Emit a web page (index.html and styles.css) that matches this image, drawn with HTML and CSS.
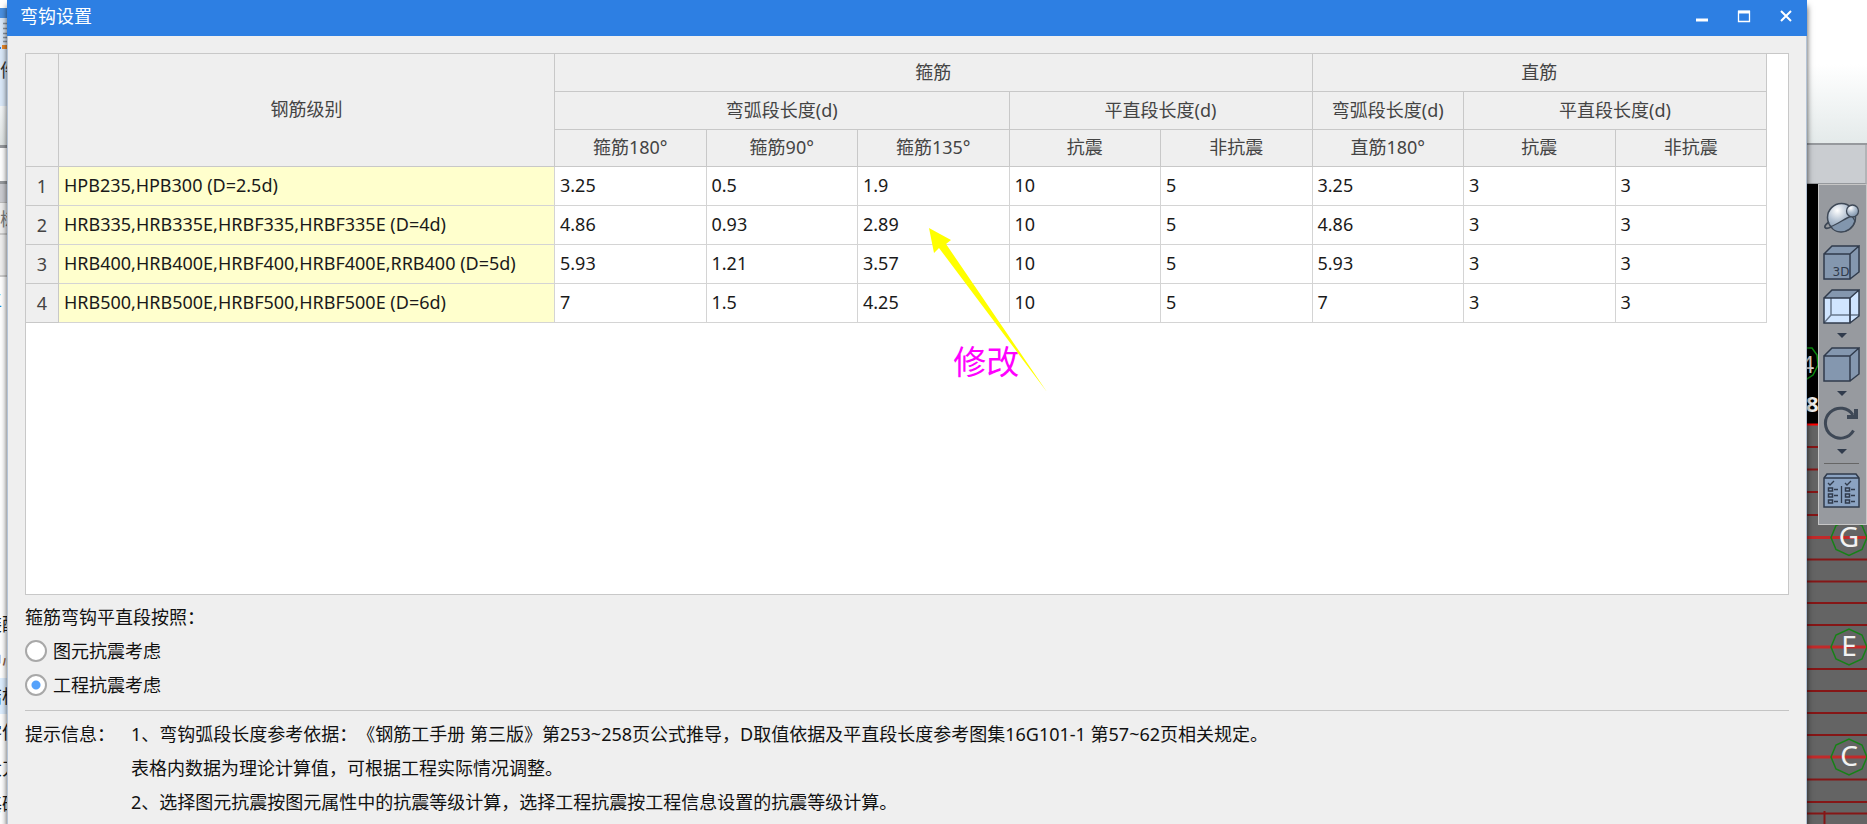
FILE: index.html
```html
<!DOCTYPE html>
<html lang="zh-CN">
<head>
<meta charset="utf-8">
<title>弯钩设置</title>
<link rel="stylesheet" href="styles.css">
</head>
<body>
<div class="app">
  <aside class="left-pane">
    <div class="lp-top"></div>
    <div class="lp-ribbon">
      <svg class="lp-list" width="7" height="32" viewBox="0 0 7 32"><path d="M3 5.500h4M3 10.500h4M3 15.500h4M3 19.500h4M3 23.500h4" stroke="#8b95a0" stroke-width="1.500"/><path d="M0 30h1" stroke="#2d7fe3" stroke-width="2"/><rect x="2" y="27" width="5" height="4" fill="#e98a2c"/></svg>
      <div class="lp-caption">件</div>
    </div>
    <div class="lp-fade"></div>
    <div class="lp-blank"></div>
    <div class="lp-bar"></div>
    <div class="lp-head">树</div>
    <div class="lp-sub"></div>
    <div class="lp-link">主</div>
    <ul class="lp-tree">
      <li>装配</li>
      <li class="accent">中心</li>
      <li class="current">结构</li>
      <li>零件</li>
      <li>大刀</li>
      <li>基础</li>
    </ul>
  </aside>

  <main class="dialog">
    <header class="titlebar">
      <h1 class="title">弯钩设置</h1>
      <div class="controls">
        <button class="control" aria-label="最小化"><svg width="14" height="14" viewBox="0 0 14 14"><path d="M1 11h12" stroke="#fff" stroke-width="3"/></svg></button>
        <button class="control" aria-label="最大化"><svg width="14" height="14" viewBox="0 0 14 14"><path d="M1.500 12.500V2.500h11v10z" fill="none" stroke="#fff" stroke-width="1.300"/><path d="M1 3h12" stroke="#fff" stroke-width="3"/></svg></button>
        <button class="control" aria-label="关闭"><svg width="14" height="14" viewBox="0 0 14 14"><path d="M2 2l10 10M12 2L2 12" stroke="#fff" stroke-width="2"/></svg></button>
      </div>
    </header>

    <div class="content">
      <div class="grid-box">
        <table class="grid">
          <colgroup><col class="c-index"><col class="c-name"><col><col><col><col><col><col><col><col></colgroup>
          <thead>
            <tr><th rowspan="3"></th><th rowspan="3">钢筋级别</th><th colspan="5">箍筋</th><th colspan="3">直筋</th></tr>
            <tr><th colspan="3">弯弧段长度(d)</th><th colspan="2">平直段长度(d)</th><th>弯弧段长度(d)</th><th colspan="2">平直段长度(d)</th></tr>
            <tr><th>箍筋180°</th><th>箍筋90°</th><th>箍筋135°</th><th>抗震</th><th>非抗震</th><th>直筋180°</th><th>抗震</th><th>非抗震</th></tr>
          </thead>
          <tbody>
            <tr><th>1</th><td class="name">HPB235,HPB300 (D=2.5d)</td><td>3.25</td><td>0.5</td><td>1.9</td><td>10</td><td>5</td><td>3.25</td><td>3</td><td>3</td></tr>
            <tr><th>2</th><td class="name">HRB335,HRB335E,HRBF335,HRBF335E (D=4d)</td><td>4.86</td><td>0.93</td><td>2.89</td><td>10</td><td>5</td><td>4.86</td><td>3</td><td>3</td></tr>
            <tr><th>3</th><td class="name">HRB400,HRB400E,HRBF400,HRBF400E,RRB400 (D=5d)</td><td>5.93</td><td>1.21</td><td>3.57</td><td>10</td><td>5</td><td>5.93</td><td>3</td><td>3</td></tr>
            <tr><th>4</th><td class="name">HRB500,HRB500E,HRBF500,HRBF500E (D=6d)</td><td>7</td><td>1.5</td><td>4.25</td><td>10</td><td>5</td><td>7</td><td>3</td><td>3</td></tr>
          </tbody>
        </table>
        <div class="callout">
          <span class="callout-text">修改</span>
          <svg class="callout-arrow" width="120" height="166" viewBox="0 0 120 166"><path d="M1 1L23 13l-5 4L119 165 11 21l-5 5z" fill="#ff0"/></svg>
        </div>
      </div>

      <fieldset class="options">
        <legend class="line">箍筋弯钩平直段按照：</legend>
        <label class="line option"><input type="radio" name="basis" class="radio">图元抗震考虑</label>
        <label class="line option"><input type="radio" name="basis" class="radio" checked>工程抗震考虑</label>
      </fieldset>
      <hr class="rule">
      <section class="hints">
        <div class="line">提示信息：</div>
        <div class="hint-list">
          <p class="line">1、弯钩弧段长度参考依据：《钢筋工手册 第三版》第253~258页公式推导，D取值依据及平直段长度参考图集16G101-1 第57~62页相关规定。</p>
          <p class="line">表格内数据为理论计算值，可根据工程实际情况调整。</p>
          <p class="line">2、选择图元抗震按图元属性中的抗震等级计算，选择工程抗震按工程信息设置的抗震等级计算。</p>
        </div>
      </section>
    </div>
  </main>

  <aside class="right-pane">
    <div class="rp-ribbon"></div>
    <div class="rp-bar"></div>
    <div class="canvas">
      <svg class="drawing" width="60" height="640" viewBox="0 0 60 640">
        <rect width="60" height="240" fill="#000"/>
        <rect y="240" width="60" height="400" fill="#646464"/>
        <path d="M-12 170l7-6h10l5 7 1 10-5 10-6 4h-10" fill="none" stroke="#0b8a10" stroke-width="1.500"/>
        <text x="-6" y="189" class="cad-small">4</text>
        <text x="-1" y="228" class="cad-bold">8</text>
        <path d="M0 240.500h60" stroke="#f00" stroke-width="2"/>
        <path d="M0 263h60M0 285.500h60M0 308h60M0 331h60M0 375.500h60M0 397.500h60M0 419h60M0 441h60M0 485h60M0 507h60M0 529h60M0 551h60M0 595.500h60M0 618h60M0 629.500h60M17.500 627v13" stroke="#851616" stroke-width="2" fill="none"/>
        <path d="M0 353.500h60M0 463h60M0 573h60" stroke="#c22a2a" stroke-width="3"/>
        <g fill="none" stroke="#168216" stroke-width="1.500">
          <path id="mark" d="M24 353.500l5-12 13-6 13 6 5 12-5 12-13 6-13-6z"/>
          <use href="#mark" y="109.500"/>
          <use href="#mark" y="219.500"/>
        </g>
        <g class="cad-letter"><text x="42" y="363">G</text><text x="42" y="472">E</text><text x="42" y="582">C</text></g>
      </svg>
      <nav class="toolbar">
        <button class="tool" aria-label="动态观察"><svg width="37" height="35" viewBox="0 0 37 35">
          <defs><radialGradient id="ball" cx=".35" cy=".25" r=".75"><stop offset="0" stop-color="#fff"/><stop offset=".5" stop-color="#b4c2d2"/><stop offset="1" stop-color="#8094ab"/></radialGradient></defs>
          <circle cx="18.500" cy="16.500" r="14" fill="url(#ball)" stroke="#3e4856" stroke-width="1.500"/>
          <path d="M8 25.500C15 23 24 16 29 15l3 5c-2 7-8 11-14 11-4 0-8-2-10-5.500z" fill="#8296ad" stroke="#3e4856" stroke-width="1.300"/>
          <path d="M6 21c-7 5-4 8 2 5" fill="none" stroke="#3e4856" stroke-width="1.800"/>
          <circle cx="29.500" cy="10" r="6" fill="url(#ball)" stroke="#3e4856" stroke-width="1.300"/></svg></button>
        <button class="tool" aria-label="三维"><svg width="37" height="35" viewBox="0 0 37 35">
          <path d="M1 9L9 1h27v26l-9 8H1z" fill="#8497af"/><path d="M1 9h26v25H1zM1 9L9 1h27L27 9M36 1v26l-9 7" fill="none" stroke="#303b4c" stroke-width="1.500"/><text x="18" y="31" class="tool-text">3D</text></svg></button>
        <button class="tool" aria-label="线框"><svg width="37" height="35" viewBox="0 0 37 35">
          <path d="M1 9L9 1h27v26l-9 7H1z" fill="#d0e5ff"/><path d="M1 9L9 1h27l-9 8z" fill="#8497af"/><path d="M8 9v17L1 34M8 26h28M27 9v25" fill="none" stroke="#68788d" stroke-width="1.500"/><path d="M1 9h26v25H1zM1 9L9 1h27L27 9M36 1v26l-9 7" fill="none" stroke="#303b4c" stroke-width="1.500"/></svg></button>
        <button class="more" aria-label="展开"><svg width="10" height="5" viewBox="0 0 10 5"><path d="M0 0h10L5 5z" fill="#303b4c"/></svg></button>
        <button class="tool" aria-label="视图"><svg width="37" height="35" viewBox="0 0 37 35">
          <path d="M1 9L9 1h27v26l-9 7H1z" fill="#8497af"/><path d="M1 9h26v25H1zM1 9L9 1h27L27 9M36 1v26l-9 7" fill="none" stroke="#303b4c" stroke-width="1.500"/></svg></button>
        <button class="more" aria-label="展开"><svg width="10" height="5" viewBox="0 0 10 5"><path d="M0 0h10L5 5z" fill="#303b4c"/></svg></button>
        <button class="tool" aria-label="旋转"><svg width="37" height="35" viewBox="0 0 37 35">
          <path d="M30.500 25.500A15 15 0 1 1 30 10" fill="none" stroke="#3e4856" stroke-width="3"/><path d="M33 4v8H24" fill="none" stroke="#3e4856" stroke-width="4"/></svg></button>
        <button class="more" aria-label="展开"><svg width="10" height="5" viewBox="0 0 10 5"><path d="M0 0h10L5 5z" fill="#303b4c"/></svg></button>
        <div class="tool-sep"></div>
        <button class="tool" aria-label="显示设置"><svg width="37" height="35" viewBox="0 0 37 35">
          <path d="M1 5l3-4h29l3 4v29H1z" fill="#8ba3c2" stroke="#303b4c" stroke-width="1.500"/><path d="M1 5h35" stroke="#303b4c" stroke-width="1.500"/>
          <path d="M5 10l2 2 4-4M22 10l2 2 4-4M18.500 13v17" fill="none" stroke="#303b4c" stroke-width="1.300"/>
          <path d="M5.500 15h4v3h-4zM5.500 21h4v3h-4zM5.500 27h4v3h-4zM22.500 15h4v3h-4zM22.500 21h4v3h-4zM22.500 27h4v3h-4zM11 16.500h4M11 22.500h4M11 28.500h4M28 16.500h4M28 22.500h4M28 28.500h4" fill="none" stroke="#303b4c" stroke-width="1.500"/></svg></button>
      </nav>
    </div>
  </aside>
</div>
</body>
</html>
```
FILE: styles.css
```css
* { box-sizing: border-box; }

body {
  margin: 0;
  font: 18px/24px "Noto Sans", "Noto Sans CJK SC", sans-serif;
  color: #1a1a1a;
  text-spacing-trim: space-all;
}

button { border: 0; padding: 0; background: none; }

.app { display: flex; height: 100vh; overflow: hidden; }

/* application pane left of the dialog */
.left-pane { width: 7px; overflow: hidden; display: flex; flex-direction: column; background: #fff; white-space: nowrap; }
.lp-top { height: 18px; flex: none; border-bottom: 10px solid #4a90e0; }
.lp-ribbon { height: 88px; flex: none; background: #dbe9f9; }
.lp-list { display: block; }
.lp-caption { color: #333; margin-top: 8px; }
.lp-fade { height: 42px; flex: none; background: linear-gradient(#f5f8f9, #dfe4e4); border-bottom: 3px solid #96999d; }
.lp-blank { height: 33px; flex: none; }
.lp-bar { height: 22px; flex: none; background: #cbccd1; border-top: 3px solid #96999d; border-bottom: 1px solid #bbb; }
.lp-head { height: 32px; flex: none; background: #efefef; color: #777; line-height: 32px; border-bottom: 2px solid #ccc; }
.lp-sub { height: 42px; flex: none; background: #efefef; border-bottom: 2px solid #ccc; }
.lp-link { color: #1583d6; margin-top: 10px; text-indent: -16px; }
.lp-tree { list-style: none; margin: auto 0 0; padding: 0 0 2px; }
.lp-tree li { height: 36px; line-height: 36px; text-indent: -16px; }
.lp-tree .accent { color: #8d5b43; }
.lp-tree .current { background: #ddeeff; }

/* dialog */
.dialog {
  flex: 1;
  min-width: 0;
  display: flex;
  flex-direction: column;
  background: #efefef;
  box-shadow: 0 6px 6px rgba(0, 0, 0, .7);
  z-index: 1;
}
.titlebar { height: 36px; flex: none; display: flex; align-items: center; justify-content: space-between; background: #2d7fe3; padding-left: 13px; }
.title { margin: 0; font-size: 18px; font-weight: 400; color: #fff; line-height: 32px; padding-bottom: 4px; }
.controls { display: flex; }
.control { width: 42px; height: 36px; display: flex; align-items: center; justify-content: center; padding-bottom: 4px; }

.content { flex: 1; display: flex; flex-direction: column; padding: 17px 17px 5px; border: solid #b4c3d6; border-width: 0 1px; }
.grid-box { flex: 1; position: relative; background: #fff; border: 1px solid #c8c8c8; margin-bottom: 5px; padding-right: 20px; }

.grid { width: 100%; table-layout: fixed; border-collapse: collapse; margin: -1px 0 0 -1px; }
.c-index { width: 33px; }
.c-name { width: 496px; }
.grid th, .grid td { border: 1px solid #c8c8c8; padding: 0 5px 2px; font-weight: 400; }
.grid th { background: #efefef; color: #444; }
.grid thead tr { height: 38px; }
.grid thead tr:last-child { height: 37px; }
.grid tbody tr { height: 39px; }
.grid td { border-color: #d4d4d4; }
.grid .name { background: #ffffcd; }
.grid tbody th { padding-bottom: 0; }

.callout { position: absolute; top: 173px; left: 51.2%; width: 120px; height: 166px; }
.callout-text { position: absolute; left: 25px; top: 115px; font-size: 33px; line-height: 40px; color: #f0f; white-space: nowrap; }
.callout-arrow { position: absolute; left: 0; top: 0; }

.options { margin: 0; padding: 0; border: 0; }
.line { margin: 0; padding: 0; line-height: 34px; display: block; color: #111; }
.option { display: flex; align-items: center; gap: 6px; }
.radio { appearance: none; width: 22px; height: 22px; margin: 0; border: 2px solid #a8a8a8; border-radius: 50%; background: #fff; }
.radio:checked { background: radial-gradient(circle, #55a2fb 4px, #fff 5px); }
.rule { width: 100%; margin: 8px 0 6px; border: 0; border-top: 1px solid #c4c4c4; }
.hints { display: flex; gap: 16px; }

/* application pane right of the dialog */
.right-pane { width: 60px; display: flex; flex-direction: column; }
.rp-ribbon { height: 145px; flex: none; background: linear-gradient(#fff 45%, #e4eaea); border-bottom: 2px solid #96999d; }
.rp-bar { height: 39px; flex: none; background: #cacdd1; border-right: 2px solid #b2b4b7; border-bottom: 1px solid #96999d; }
.canvas { flex: 1; position: relative; background: #646464; overflow: hidden; }
.drawing { position: absolute; left: 0; top: 0; }
.cad-letter { font: 28px "Noto Sans", sans-serif; fill: #f2f2f2; text-anchor: middle; }
.cad-small { font: 23px "Noto Sans", sans-serif; fill: #ddd; }
.cad-bold { font: bold 22px "Noto Sans", sans-serif; fill: #eee; }

.toolbar {
  position: relative;
  margin-left: 11px;
  padding: 16px 2px 16px 0;
  display: flex;
  flex-direction: column;
  align-items: center;
  gap: 9px;
  background: #979a9f;
  border: 1px solid #c6c6c6;
}
.tool { height: 35px; }
.tool svg, .more svg { display: block; }
.more { height: 5px; }
.tool-text { font: 12px "DejaVu Sans", sans-serif; fill: #303b4c; text-anchor: middle; }
.tool-sep { width: 35px; height: 1px; background: #666; }
```
